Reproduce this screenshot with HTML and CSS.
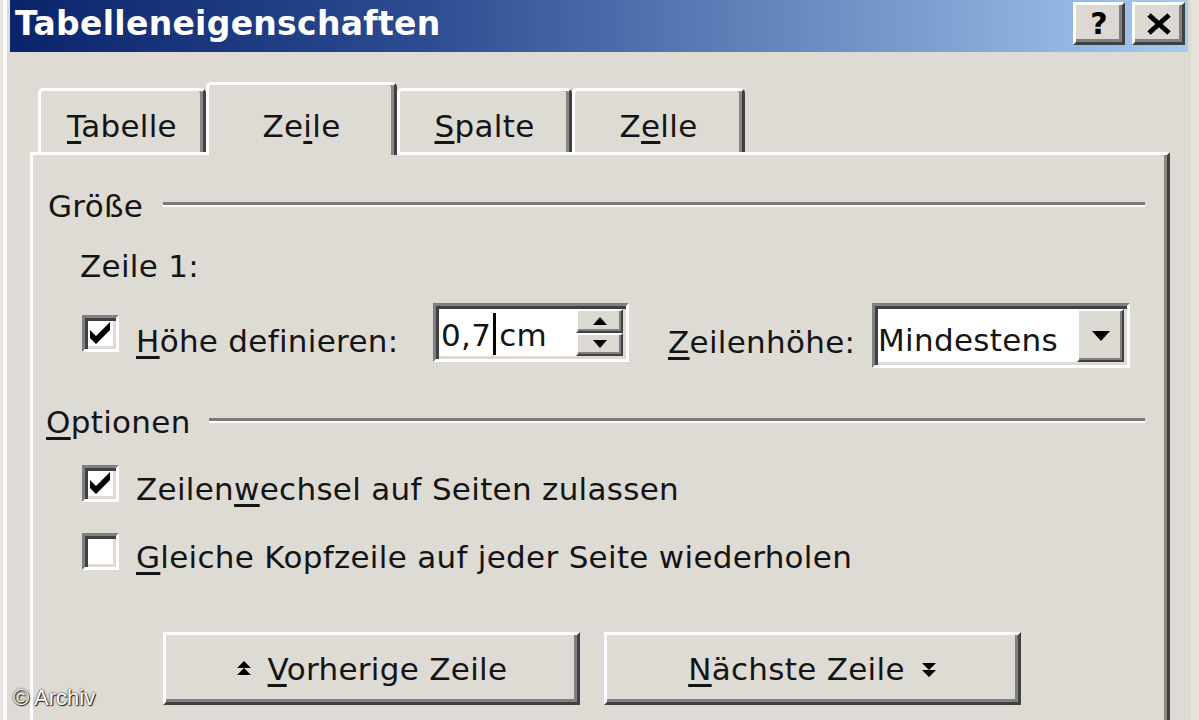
FILE: index.html
```html
<!DOCTYPE html>
<html lang="de">
<head>
  <meta charset="UTF-8">
  <meta name="viewport" content="width=device-width, initial-scale=1.0">
  <title>Tabelleneigenschaften</title>
  <link rel="stylesheet" href="styles.css">
</head>
<body>
  <!-- Dialog Window -->
  <div class="window">
    <div class="titlebar">
      <span class="title">Tabelleneigenschaften</span>
      <div class="caption-buttons">
        <button class="caption-btn help">?</button>
        <button class="caption-btn close">
          <svg width="26" height="22" viewBox="0 0 26 22">
            <path d="M3 2 L23 20 M23 2 L3 20" stroke="#000" stroke-width="5" fill="none"/>
          </svg>
        </button>
      </div>
    </div>

    <div class="window-body">
      <!-- Tabs -->
      <div class="tabs">
        <div class="tab tab-tabelle"><u>T</u>abelle</div>
        <div class="tab tab-zeile active">Ze<u>i</u>le</div>
        <div class="tab tab-spalte"><u>S</u>palte</div>
        <div class="tab tab-zelle">Z<u>e</u>lle</div>
      </div>

      <!-- Tab Page: Zeile -->
      <div class="panel">
        <div class="group-title">
          <span>Größe</span>
          <div class="etched"></div>
        </div>

        <div class="row-label">Zeile 1:</div>

        <div class="size-row">
          <span class="checkbox checked">
            <svg width="25" height="25" viewBox="0 0 25 25">
              <polygon points="2,9 8,15 22,1 22,9 8,23 2,17" fill="#000"/>
            </svg>
          </span>
          <label class="size-label"><u>H</u>öhe definieren:</label>
          <div class="spin">
            <span class="spin-text">0,7<span class="caret"></span>cm</span>
            <div class="spin-buttons">
              <span class="spin-btn">
                <svg width="14" height="8" viewBox="0 0 14 8"><polygon points="7,0 14,8 0,8" fill="#000"/></svg>
              </span>
              <span class="spin-btn">
                <svg width="14" height="8" viewBox="0 0 14 8"><polygon points="0,0 14,0 7,8" fill="#000"/></svg>
              </span>
            </div>
          </div>
          <label class="height-label"><u>Z</u>eilenhöhe:</label>
          <div class="combo">
            <span class="combo-text">Mindestens</span>
            <span class="combo-btn">
              <svg width="18" height="10" viewBox="0 0 18 10"><polygon points="0,0 18,0 9,10" fill="#000"/></svg>
            </span>
          </div>
        </div>

        <div class="group-title options">
          <span><u>O</u>ptionen</span>
          <div class="etched"></div>
        </div>

        <div class="check-row">
          <span class="checkbox checked">
            <svg width="25" height="25" viewBox="0 0 25 25">
              <polygon points="2,9 8,15 22,1 22,9 8,23 2,17" fill="#000"/>
            </svg>
          </span>
          <span class="check-label">Zeilen<u>w</u>echsel auf Seiten zulassen</span>
        </div>
        <div class="check-row second">
          <span class="checkbox"></span>
          <span class="check-label"><u>G</u>leiche Kopfzeile auf jeder Seite wiederholen</span>
        </div>

        <!-- Navigation Buttons -->
        <div class="nav-buttons">
          <button class="push-btn">
            <svg width="16" height="16" viewBox="0 0 16 16"><path d="M8 0 L15 7 H1 Z M8 7 L15 14 H1 Z" fill="#000"/></svg>
            <span><u>V</u>orherige Zeile</span>
          </button>
          <button class="push-btn">
            <span><u>N</u>ächste Zeile</span>
            <svg width="16" height="16" viewBox="0 0 16 16"><path d="M1 2 H15 L8 9 Z M1 9 H15 L8 16 Z" fill="#000"/></svg>
          </button>
        </div>
      </div>
    </div>
  </div>

  <div class="credit">© Archiv</div>
</body>
</html>
```

FILE: styles.css
```css
/* Global Styles */
* {
  box-sizing: border-box;
}

body {
  margin: 0;
  width: 1199px;
  height: 720px;
  overflow: hidden;
  position: relative;
  background-color: #dedad4;
  font-family: "DejaVu Sans", sans-serif;
  font-size: 31px;
  letter-spacing: 0.3px;
  line-height: 36px;
  color: #141414;
}

u {
  text-decoration-thickness: 3px;
  text-underline-offset: 4px;
}

/* Window Frame */
.window {
  height: 720px;
  padding: 0 11px 0 10px;
  box-shadow: inset 3px 0 #e9e6e1, inset 7px 0 #fbfbfa, inset -8px 0 #e6e2dc;
}

.titlebar {
  height: 52px;
  display: flex;
  background: linear-gradient(to right, #0a246a, #2c4c92 35%, #a6caf0);
}

.title {
  color: #fff;
  font-weight: bold;
  font-size: 33px;
  line-height: 32px;
  padding: 8px 0 0 5px;
}

.caption-buttons {
  margin-left: auto;
  display: flex;
  gap: 7px;
  padding: 2px 3px 0 0;
}

.caption-btn {
  width: 52px;
  height: 43px;
  padding: 0;
  background-color: #dcd8d2;
  border: 3px solid;
  border-color: #fff #404040 #404040 #fff;
  box-shadow: inset -3px -3px #808080;
  font-family: "DejaVu Sans", sans-serif;
  font-weight: bold;
  font-size: 30px;
  line-height: 34px;
  color: #000;
  display: flex;
  align-items: center;
  justify-content: center;
}

.caption-btn.close {
  width: 53px;
}

/* Tabs */
.window-body {
  padding: 30px 0 0 20px;
}

.tabs {
  display: flex;
  align-items: flex-end;
  height: 70px;
  padding-left: 8px;
}

.tab {
  height: 64px;
  padding-top: 17px;
  text-align: center;
  border: 3px solid #fff;
  border-bottom: none;
  border-right-color: #404040;
  border-radius: 5px 5px 0 0;
  box-shadow: inset -3px 0 #8a8782;
}

.tab-tabelle { width: 168px; }
.tab-zeile { width: 191px; }
.tab-spalte { width: 175px; }
.tab-zelle { width: 173px; }

.tab.active {
  position: relative;
  z-index: 1;
  height: 73px;
  margin-bottom: -3px;
  padding-top: 23px;
  background-color: #dedad4;
}

/* Tab Page */
.panel {
  width: 1140px;
  height: 600px;
  padding: 33px 22px 0 15px;
  border-top: 3px solid #fff;
  border-left: 3px solid #fff;
  border-right: 3px solid #404040;
  box-shadow: inset -3px 0 #8a8782;
}

.group-title {
  display: flex;
  align-items: center;
  gap: 20px;
}

.group-title.options {
  margin-top: 36px;
  margin-left: -2px;
  gap: 18px;
}

.etched {
  flex: 1;
  height: 5px;
  border-top: 3px solid #7c7975;
  border-bottom: 2px solid #fff;
  margin-top: -4px;
}

.row-label {
  margin: 24px 0 0 32px;
}

/* Checkbox */
.checkbox {
  width: 37px;
  height: 37px;
  flex-shrink: 0;
  display: flex;
  align-items: center;
  justify-content: center;
  background-color: #fff;
  border: 3px solid;
  border-color: #808080 #fff #fff #808080;
  box-shadow: inset 3px 3px #404040, inset -3px -3px #dedad4;
}

/* Size Row */
.size-row {
  display: flex;
  align-items: flex-start;
  height: 65px;
  margin-top: 19px;
  padding-left: 34px;
}

.size-row .checkbox {
  margin-top: 12px;
}

.size-label {
  width: 297px;
  margin: 20px 0 0 17px;
}

.spin {
  width: 196px;
  height: 59px;
  display: flex;
  background-color: #fff;
  border: 3px solid;
  border-color: #808080 #fff #fff #808080;
  box-shadow: inset 3px 3px #404040, inset -3px -3px #dedad4;
  padding: 3px;
}

.spin-text {
  flex: 1;
  padding: 4px 0 0 2px;
  white-space: nowrap;
}

.caret {
  display: inline-block;
  width: 3px;
  height: 42px;
  margin: 0 3px 0 2px;
  background-color: #000;
  vertical-align: -9px;
}

.spin-buttons {
  width: 47px;
  display: flex;
  flex-direction: column;
}

.spin-btn,
.combo-btn {
  flex: 1;
  display: flex;
  align-items: center;
  justify-content: center;
  background-color: #dcd8d2;
  border: 2px solid;
  border-color: #fff #404040 #404040 #fff;
  box-shadow: inset -2px -2px #808080;
}

.height-label {
  width: 204px;
  margin: 21px 0 0 39px;
}

.combo {
  width: 258px;
  height: 65px;
  display: flex;
  background-color: #fff;
  border: 3px solid;
  border-color: #808080 #fff #fff #808080;
  box-shadow: inset 3px 3px #404040, inset -3px -3px #dedad4;
  padding: 3px;
}

.combo-text {
  flex: 1;
  padding: 13px 0 0 0;
  white-space: nowrap;
}

.combo-btn {
  flex: 0 0 47px;
}

/* Options */
.check-row {
  display: flex;
  align-items: flex-start;
  margin-top: 25px;
  padding-left: 34px;
}

.check-row.second {
  margin-top: 26px;
}

.check-label {
  margin: 6px 0 0 17px;
}

/* Push Buttons */
.nav-buttons {
  display: flex;
  gap: 24px;
  margin-top: 57px;
  padding-left: 115px;
}

.push-btn {
  width: 417px;
  height: 73px;
  display: flex;
  align-items: center;
  justify-content: center;
  gap: 16px;
  background-color: #dedad4;
  border: 3px solid;
  border-color: #fff #404040 #404040 #fff;
  box-shadow: inset -3px -3px #808080;
  font: inherit;
  letter-spacing: inherit;
  color: inherit;
  padding: 0;
}

/* Watermark */
.credit {
  position: absolute;
  left: 13px;
  top: 686px;
  font-family: "Liberation Sans", Arial, sans-serif;
  font-size: 22px;
  letter-spacing: 0;
  line-height: 24px;
  color: #fff;
  text-shadow: 0 0 2px #000, 1px 1px 1px #222;
}
```
